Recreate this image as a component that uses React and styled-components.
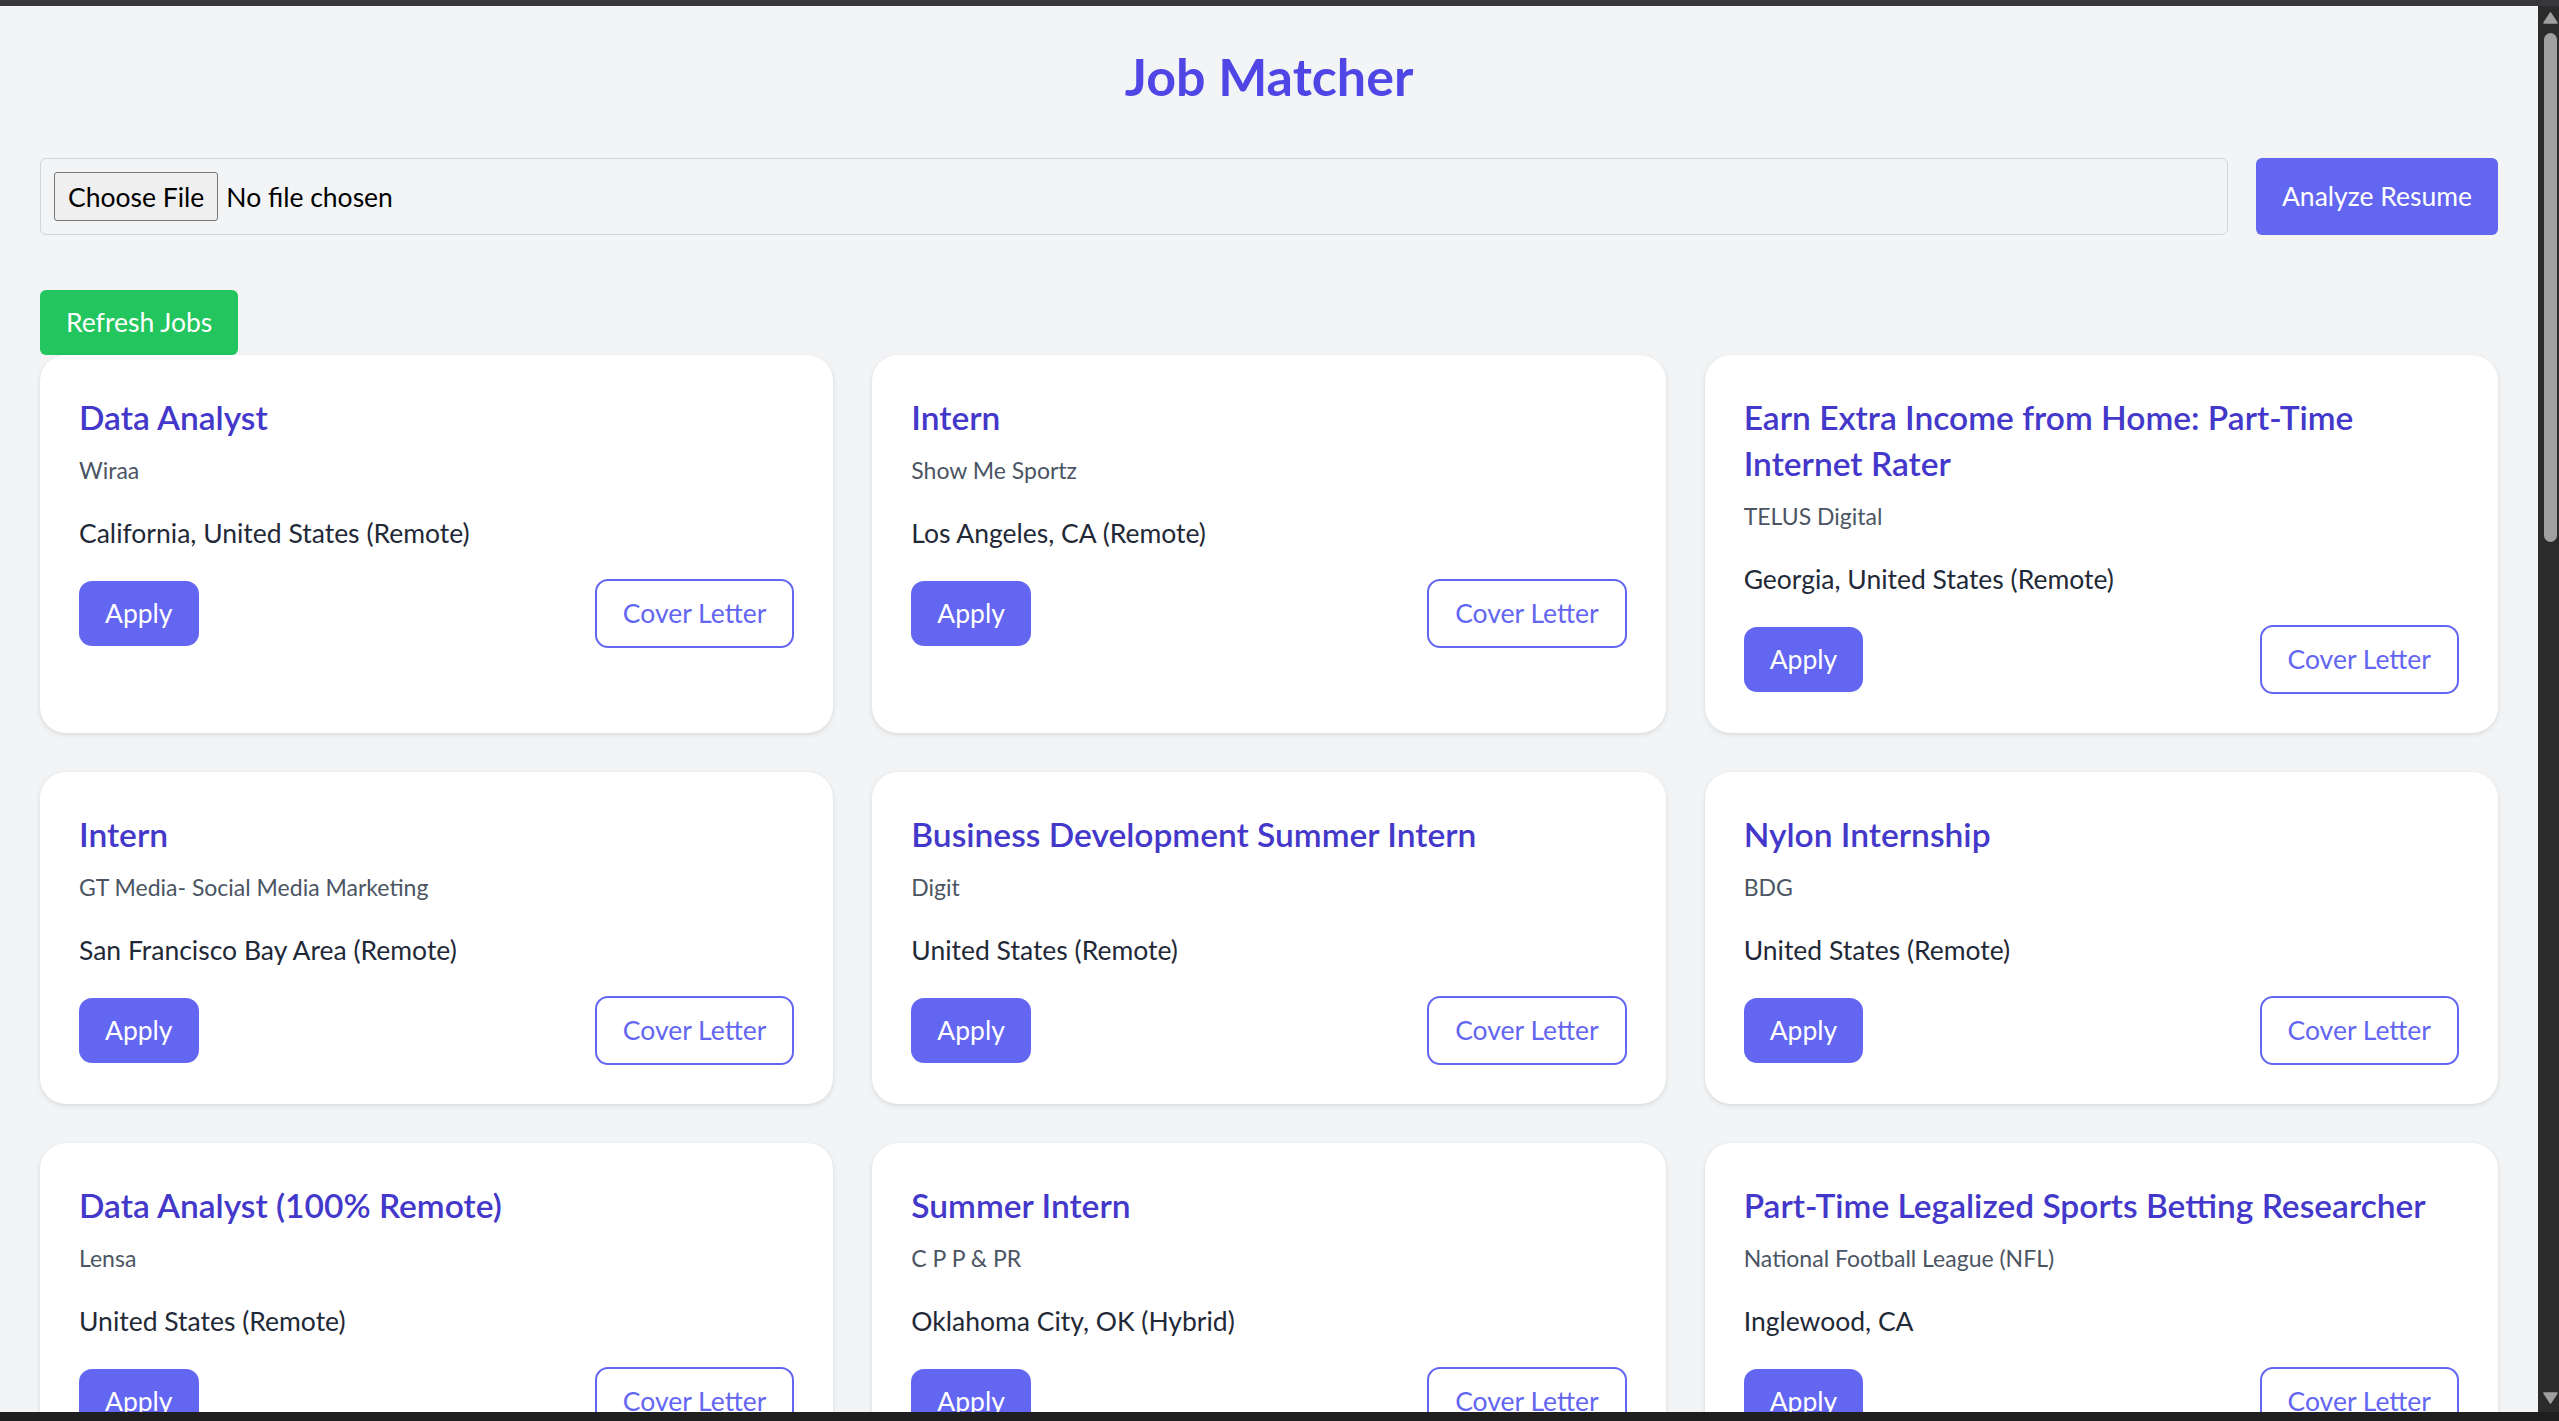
import React from 'react'
import styled, { createGlobalStyle } from 'styled-components'

const GlobalStyle = createGlobalStyle`
  html, body {
    margin: 0;
    padding: 0;
    height: 100%;
    overflow: hidden;
    background: #2b2b2b;
  }
  * {
    box-sizing: border-box;
  }
`

const FONT = `'Lato', 'Open Sans', 'Liberation Sans', sans-serif`

const jobs = [
  { title: 'Data Analyst', company: 'Wiraa', location: 'California, United States (Remote)' },
  { title: 'Intern', company: 'Show Me Sportz', location: 'Los Angeles, CA (Remote)' },
  { title: 'Earn Extra Income from Home: Part-Time Internet Rater', company: 'TELUS Digital', location: 'Georgia, United States (Remote)' },
  { title: 'Intern', company: 'GT Media- Social Media Marketing', location: 'San Francisco Bay Area (Remote)' },
  { title: 'Business Development Summer Intern', company: 'Digit', location: 'United States (Remote)' },
  { title: 'Nylon Internship', company: 'BDG', location: 'United States (Remote)' },
  { title: 'Data Analyst (100% Remote)', company: 'Lensa', location: 'United States (Remote)' },
  { title: 'Summer Intern', company: 'C P P & PR', location: 'Oklahoma City, OK (Hybrid)' },
  { title: 'Part-Time Legalized Sports Betting Researcher', company: 'National Football League (NFL)', location: 'Inglewood, CA' },
]

const Frame = styled.div`
  height: 100vh;
  display: flex;
  flex-direction: column;
  background: #2b2b2b;
`

const WindowEdge = styled.div`
  flex: none;
  height: ${props => props.size}px;
  background: ${props => props.color};
`

const Viewport = styled.div`
  flex: 1;
  display: flex;
  min-height: 0;
`

const Page = styled.main`
  flex: 1;
  min-width: 0;
  overflow: hidden;
  background: #f3f4f6;
  padding: 41px 40px 0;
  font-family: ${FONT};
`

const Heading = styled.h1`
  margin: 0 0 52px;
  text-align: center;
  font-size: 52px;
  line-height: 59px;
  font-weight: 700;
  color: #4f46e5;
`

const UploadRow = styled.div`
  display: flex;
  gap: 28px;
  align-items: stretch;
`

const FileBox = styled.div`
  flex: 1;
  display: flex;
  align-items: center;
  gap: 8px;
  padding: 13px;
  border: 1px solid #d1d5db;
  border-radius: 6px;
  font-size: 26.5px;
  color: #000;
`

const ChooseButton = styled.button`
  height: 49px;
  padding: 0 13px;
  font-family: ${FONT};
  font-size: 26.5px;
  color: #000;
  background: #efefef;
  border: 1px solid #767676;
  border-radius: 3px;
`

const SolidButton = styled.button`
  border: none;
  font-family: ${FONT};
  font-size: 26.5px;
  line-height: 39px;
  color: #fff;
  background: ${props => props.color};
  border-radius: ${props => props.radius || 6}px;
  padding: 13px 26px;
  cursor: pointer;
`

const RefreshButton = styled(SolidButton)`
  margin-top: 55px;
  display: block;
`

const Grid = styled.div`
  display: grid;
  grid-template-columns: repeat(3, 1fr);
  gap: 39px;
`

const Card = styled.article`
  background: #fff;
  border-radius: 26px;
  padding: 39px;
  box-shadow: 0 2px 6px rgba(0, 0, 0, 0.08), 0 1px 3px rgba(0, 0, 0, 0.05);
`

const JobTitle = styled.h2`
  margin: 0;
  font-size: 33.5px;
  line-height: 46px;
  font-weight: 600;
  color: #4338ca;
`

const Company = styled.p`
  margin: 14px 0 0;
  font-size: 23px;
  line-height: 33px;
  color: #4b5563;
`

const Location = styled.p`
  margin: 27px 0 0;
  font-size: 26.5px;
  line-height: 39px;
  color: #1f2937;
`

const Actions = styled.div`
  margin-top: 26px;
  display: flex;
  align-items: center;
  justify-content: space-between;
`

const OutlineButton = styled.button`
  font-family: ${FONT};
  font-size: 26.5px;
  line-height: 39px;
  padding: 13px 26px;
  color: #6366f1;
  background: #fff;
  border: 2px solid #6366f1;
  border-radius: 13px;
  cursor: pointer;
`

const ScrollTrack = styled.div`
  flex: none;
  width: 21px;
  background: #2b2b2b;
  display: flex;
  flex-direction: column;
  align-items: center;
  padding: 6px 0 8px;
`

const Thumb = styled.div`
  width: 13px;
  height: 509px;
  margin: 9px 0 0 3px;
  border-radius: 7px;
  background: #a0a0a0;
`

const Spacer = styled.div`
  flex: 1;
`

const Arrow = ({ down }) => (
  <svg width="15" height="12" viewBox="0 0 15 12" style={{ display: 'block', marginLeft: 3 }}>
    <path d={down ? 'M1 1 H14 L7.5 11 Z' : 'M1 11 H14 L7.5 1 Z'} fill="#a0a0a0" stroke="#a0a0a0" strokeLinejoin="round" strokeWidth="1.5" />
  </svg>
)

function JobCard({ job }) {
  return (
    <Card>
      <JobTitle>{job.title}</JobTitle>
      <Company>{job.company}</Company>
      <Location>{job.location}</Location>
      <Actions>
        <SolidButton color="#6366f1" radius={13}>Apply</SolidButton>
        <OutlineButton>Cover Letter</OutlineButton>
      </Actions>
    </Card>
  )
}

export default function App() {
  return (
    <>
      <GlobalStyle />
      <Frame>
        <WindowEdge size={6} color="#38373c" />
        <Viewport>
          <Page>
            <Heading>Job Matcher</Heading>
            <UploadRow>
              <FileBox>
                <ChooseButton>Choose File</ChooseButton>
                <span>No file chosen</span>
              </FileBox>
              <SolidButton color="#6366f1">Analyze Resume</SolidButton>
            </UploadRow>
            <RefreshButton color="#22c55e">Refresh Jobs</RefreshButton>
            <Grid>
              {jobs.map((job, i) => (
                <JobCard key={i} job={job} />
              ))}
            </Grid>
          </Page>
          <ScrollTrack>
            <Arrow />
            <Thumb />
            <Spacer />
            <Arrow down />
          </ScrollTrack>
        </Viewport>
        <WindowEdge size={9} color="#1f1f1f" />
      </Frame>
    </>
  )
}
